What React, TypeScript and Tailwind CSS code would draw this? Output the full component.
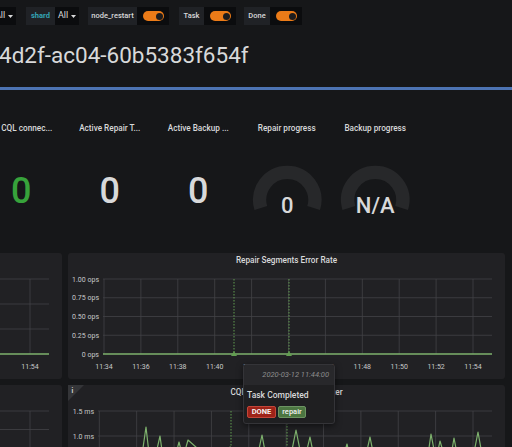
import React from 'react';

const Caret = () => (
  <svg width="5" height="3" viewBox="0 0 5 3">
    <path d="M0 0h5L2.5 3z" fill="#d8d9da" />
  </svg>
);

const Dropdown: React.FC<{ className?: string }> = ({ className = '' }) => (
  <div className={`flex items-center justify-center gap-[3px] w-[24px] h-full bg-[#0b0c0e] text-[9px] text-[#d8d9da] ${className}`}>
    <span>All</span>
    <Caret />
  </div>
);

const Label: React.FC<{ className?: string; children: React.ReactNode }> = ({ className = '', children }) => (
  <div className={`flex items-center justify-center h-full bg-[#202226] text-[7.5px] ${className}`}>{children}</div>
);

const Toggle = () => (
  <div className="flex items-center h-full w-[32px] bg-[#0b0c0e] pl-[6px]">
    <div className="flex items-center justify-end w-[21px] h-[10px] rounded-full bg-[#eb7b18] pr-[1.5px]">
      <div className="w-[7px] h-[7px] rounded-full bg-[#1c1c1e]" />
    </div>
  </div>
);

const Gauge: React.FC<{ value: string }> = ({ value }) => (
  <svg width="88.5" height="60" viewBox="0 0 88.5 60" className="mt-[27px]">
    <path d="M17.86 48.07 A27.6 27.6 0 1 1 70.64 48.07" fill="none" stroke="#27282a" strokeWidth="13.3" />
    <text x="44.25" y="53" textAnchor="middle" fontSize="22" fontWeight="500" fill="#d8d9da">
      {value}
    </text>
  </svg>
);

const topTicks = ['11:34', '11:36', '11:38', '11:40', '11:42', '11:44', '11:46', '11:48', '11:50', '11:52', '11:54'];
const grid = '#434346';
const tick = '#c8c9ca';

const latency =
  '98,470 110,462 120,466 130,458 138,464 142,455 146,427 150,462 155,458 160,436 164,465 170,460 175,458 179,442 183,458 188,440 197,448 205,470 212,462 220,466 226,458 230,447 234,449 240,465 248,460 255,468 262,435 267,462 272,458 280,466 287,452 291,455 296,430 301,455 305,458 310,437 315,462 322,466 330,460 338,466 343,458 347,444 351,462 356,458 362,468 366,455 370,437 375,462 382,466 390,458 398,465 405,460 412,466 420,458 427,462 431,434 436,460 440,441 445,458 450,462 454,438 459,464 466,458 472,463 478,432 483,460 488,456 492,462';

export default function App() {
  return (
    <div className="relative w-[512px] h-[447px] overflow-hidden bg-[#161719] text-[#d8d9da] font-['Roboto',sans-serif]">
      {/* variables */}
      <div className="flex items-stretch gap-[9px] h-[18px] mt-[7px]">
        <Dropdown className="-ml-[8px]" />
        <div className="flex ml-[1px]">
          <Label className="w-[29px] font-bold text-[#33a2b5]">shard</Label>
          <Dropdown />
        </div>
        <div className="flex">
          <Label className="w-[49px] font-medium">node_restart</Label>
          <Toggle />
        </div>
        <div className="flex ml-[1px]">
          <Label className="w-[25px] font-medium">Task</Label>
          <Toggle />
        </div>
        <div className="flex -ml-[1px]">
          <Label className="w-[26px] font-medium">Done</Label>
          <Toggle />
        </div>
      </div>

      {/* title */}
      <div className="mt-[17px] -ml-[1px] h-[26px] text-[22.5px] leading-[26px] whitespace-nowrap">4d2f-ac04-60b5383f654f</div>
      <div className="mt-[19px] h-[3px] bg-[#4d74b3]" />

      {/* stats */}
      <div className="flex h-[163px] -ml-[23px] pt-[33px]">
        <div className="flex flex-col items-center w-[88.5px]">
          <div className="h-[10px] leading-[10px] text-[8.2px] font-medium whitespace-nowrap ml-[11px]">CQL connec...</div>
          <div className="mt-[37.7px] text-[36px] leading-[40px] font-medium text-[#37a33b]">0</div>
        </div>
        <div className="flex flex-col items-center w-[88.5px]">
          <div className="h-[10px] leading-[10px] text-[8.2px] font-medium whitespace-nowrap">Active Repair T...</div>
          <div className="mt-[37.7px] text-[36px] leading-[40px] font-medium">0</div>
        </div>
        <div className="flex flex-col items-center w-[88.5px]">
          <div className="h-[10px] leading-[10px] text-[8.2px] font-medium whitespace-nowrap">Active Backup ...</div>
          <div className="mt-[37.7px] text-[36px] leading-[40px] font-medium">0</div>
        </div>
        <div className="flex flex-col items-center w-[88.5px]">
          <div className="h-[10px] leading-[10px] text-[8.2px] font-medium whitespace-nowrap">Repair progress</div>
          <Gauge value="0" />
        </div>
        <div className="flex flex-col items-center w-[88.5px]">
          <div className="h-[10px] leading-[10px] text-[8.2px] font-medium whitespace-nowrap">Backup progress</div>
          <Gauge value="N/A" />
        </div>
      </div>

      {/* graphs row 1 */}
      <div className="flex gap-[6px] h-[126px]">
        <div className="-ml-[8px] w-[70px] rounded-[3px] bg-[#212124] flex flex-col">
          <div className="h-[15px]" />
          <svg width="70" height="111" viewBox="-8 268 70 111">
            {[279, 304, 329].map((y) => (
              <line key={y} x1="-8" x2="49" y1={y} y2={y} stroke={grid} strokeWidth="0.8" />
            ))}
            <line x1="30" x2="30" y1="279" y2="354" stroke={grid} strokeWidth="0.8" />
            <line x1="-8" x2="49" y1="354" y2="354" stroke="#7eb26d" strokeWidth="1.5" />
            <text x="30" y="368.5" textAnchor="middle" fontSize="7" fill={tick}>11:54</text>
          </svg>
        </div>
        <div className="w-[437px] rounded-[3px] bg-[#212124] flex flex-col">
          <div className="h-[15px] leading-[15px] text-center text-[8.2px] font-medium">Repair Segments Error Rate</div>
          <svg width="437" height="111" viewBox="68 268 437 111">
            {[279, 297.75, 316.5, 335.25].map((y) => (
              <line key={y} x1="103" x2="492" y1={y} y2={y} stroke={grid} strokeWidth="0.8" />
            ))}
            {topTicks.map((t, i) => {
              const x = 104 + i * 36.9;
              return (
                <g key={t}>
                  <line x1={x} x2={x} y1="279" y2="354" stroke={grid} strokeWidth="0.8" />
                  <text x={x} y="368.5" textAnchor="middle" fontSize="7" fill={tick}>{t}</text>
                </g>
              );
            })}
            {[
              ['1.00 ops', 279],
              ['0.75 ops', 297.75],
              ['0.50 ops', 316.5],
              ['0.25 ops', 335.25],
              ['0 ops', 354],
            ].map(([l, y]) => (
              <text key={l as string} x="99" y={(y as number) + 2.5} textAnchor="end" fontSize="7" fill={tick}>{l}</text>
            ))}
            <line x1="103" x2="492" y1="354" y2="354" stroke="#7eb26d" strokeWidth="1.5" />
            {[234, 289].map((x) => (
              <g key={x}>
                <line x1={x} x2={x} y1="279" y2="352" stroke="#629e51" strokeWidth="1" strokeDasharray="1.5 1.5" />
                <polygon points={`${x - 3},356 ${x + 3},356 ${x},351`} fill="#629e51" />
              </g>
            ))}
          </svg>
        </div>
      </div>

      {/* graphs row 2 */}
      <div className="flex gap-[6px] h-[80px] mt-[6px]">
        <div className="-ml-[8px] w-[70px] rounded-[3px] bg-[#212124] flex flex-col">
          <div className="h-[15px]" />
          <svg width="70" height="65" viewBox="-8 400 70 65">
            {[411, 429.5, 448].map((y) => (
              <line key={y} x1="-8" x2="49" y1={y} y2={y} stroke={grid} strokeWidth="0.8" />
            ))}
            <line x1="30" x2="30" y1="411" y2="465" stroke={grid} strokeWidth="0.8" />
          </svg>
        </div>
        <div className="relative w-[437px] rounded-[3px] bg-[#212124] flex flex-col">
          <svg width="16" height="16" viewBox="0 0 16 16" className="absolute left-0 top-0">
            <polygon points="0,0 16,0 0,16" fill="#343538" />
            <text x="3.5" y="7.5" fontSize="6.5" fontWeight="700" fill="#d8d9da">i</text>
          </svg>
          <div className="h-[15px] leading-[15px] text-center text-[8.2px] font-medium whitespace-nowrap">CQL Probe Latency per Cluster</div>
          <svg width="437" height="65" viewBox="68 400 437 65">
            {[411, 436, 461].map((y) => (
              <line key={y} x1="98" x2="492" y1={y} y2={y} stroke={grid} strokeWidth="0.8" />
            ))}
            {Array.from({ length: 11 }).map((_, i) => {
              const x = 99.3 + i * 37.37;
              return <line key={i} x1={x} x2={x} y1="411" y2="465" stroke={grid} strokeWidth="0.8" />;
            })}
            <text x="94" y="413.5" textAnchor="end" fontSize="7" fill={tick}>1.5 ms</text>
            <text x="94" y="438.5" textAnchor="end" fontSize="7" fill={tick}>1.0 ms</text>
            {[231, 287].map((x) => (
              <line key={x} x1={x} x2={x} y1="411" y2="465" stroke="#629e51" strokeWidth="1" strokeDasharray="1.5 1.5" />
            ))}
            <polyline points={latency} fill="none" stroke="#7eb26d" strokeWidth="1.2" strokeLinejoin="round" />
          </svg>
        </div>
      </div>

      {/* annotation tooltip */}
      <div className="absolute left-[243px] top-[364px] w-[92px] rounded-[3px] border border-[#343438] bg-[#1f1f21] shadow-[0_2px_6px_rgba(0,0,0,0.5)] overflow-hidden">
        <div className="h-[20px] flex items-center justify-end pr-[5px] bg-[#28282b] text-[7.5px] italic text-[#8e8e8e] whitespace-nowrap">
          2020-03-12 11:44:00
        </div>
        <div className="px-[3px] pt-[4px] pb-[5px]">
          <div className="text-[8.5px] font-medium leading-[12px] whitespace-nowrap">Task Completed</div>
          <div className="flex gap-[2px] mt-[5px]">
            <span className="flex items-center justify-center w-[29px] h-[12px] rounded-[2px] border border-[#c2463a] bg-[#9e2318] text-[7.5px] font-bold text-[#f2f2f2]">
              DONE
            </span>
            <span className="flex items-center justify-center w-[28px] h-[12px] rounded-[2px] border border-[#6c9462] bg-[#4c7641] text-[7.5px] font-medium text-[#f2f2f2]">
              repair
            </span>
          </div>
        </div>
      </div>
    </div>
  );
}
